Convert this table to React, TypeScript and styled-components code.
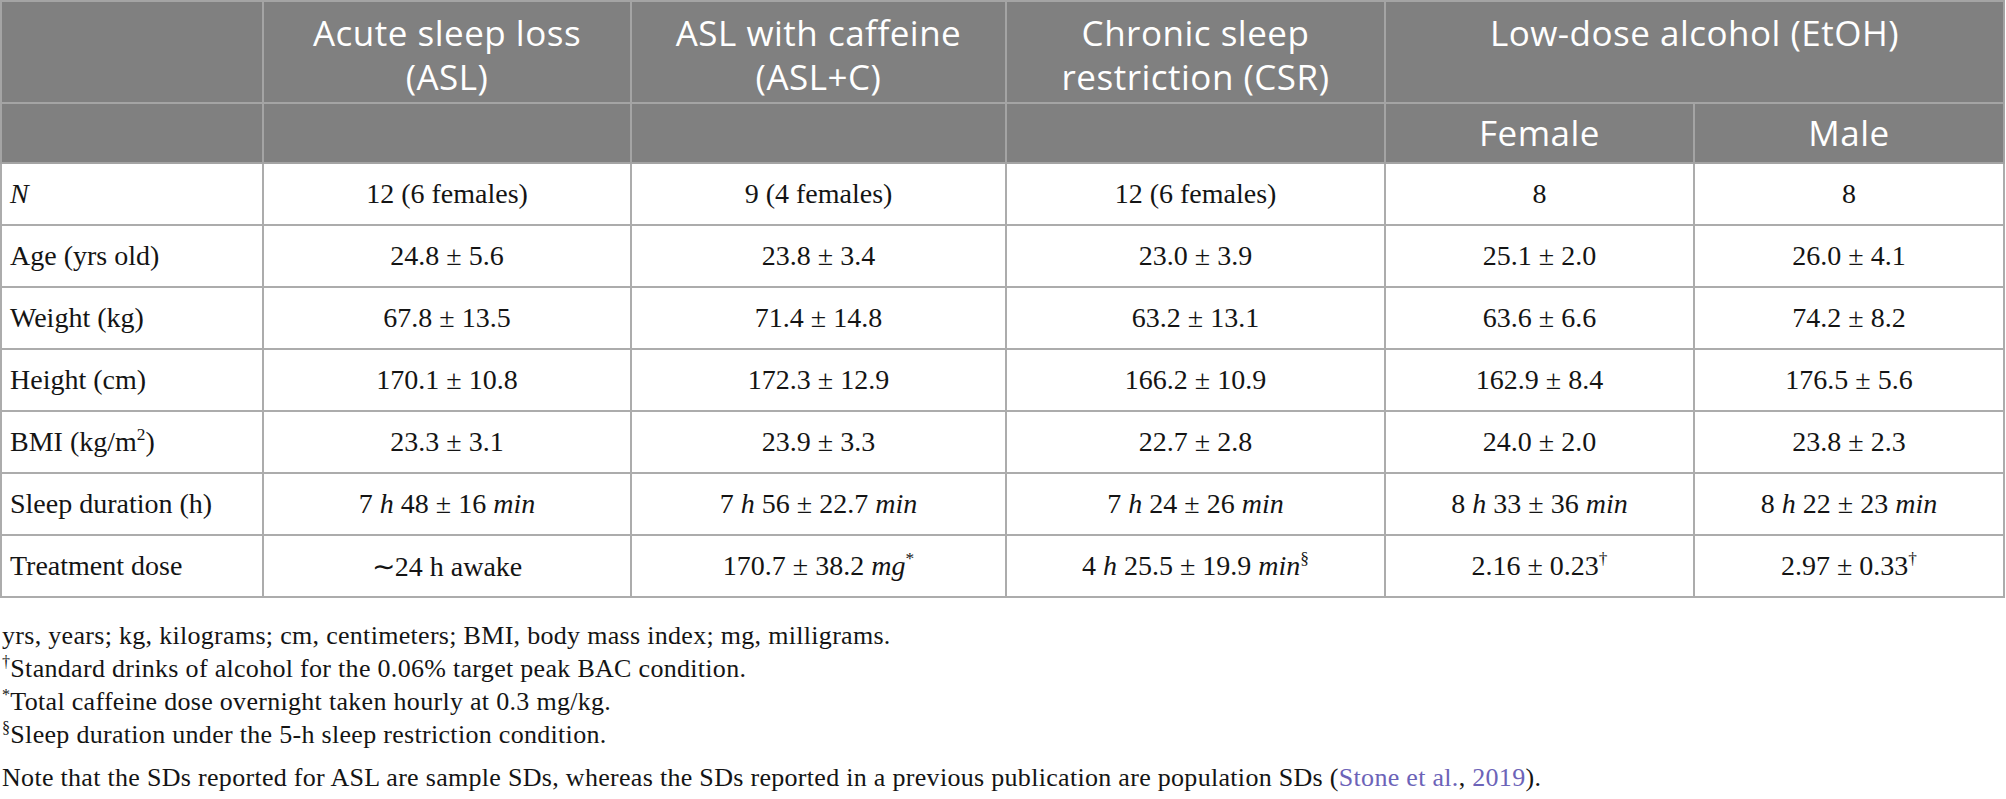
import React, { ReactNode } from "react";
import styled, { createGlobalStyle } from "styled-components";

const GlobalStyle = createGlobalStyle`
  html, body {
    margin: 0;
    padding: 0;
    background: #ffffff;
  }
`;

const Page = styled.div`
  width: 2006px;
  box-sizing: border-box;
`;

const Table = styled.table`
  width: 2003px;
  border-collapse: collapse;
  table-layout: fixed;
`;

const HeadCell = styled.th<{ $tall?: boolean }>`
  background: #808080;
  color: #ffffff;
  font-family: "Open Sans", "Noto Sans", sans-serif;
  font-weight: 400;
  font-size: 35px;
  letter-spacing: 0.5px;
  line-height: 44px;
  text-align: center;
  vertical-align: ${(p) => (p.$tall ? "top" : "middle")};
  height: ${(p) => (p.$tall ? "102px" : "60px")};
  padding: ${(p) => (p.$tall ? "9px 6px 0" : "0 6px")};
  border: 2px solid #a4a4a4;
  box-sizing: border-box;
`;

const Cell = styled.td`
  font-family: "Liberation Serif", "Times New Roman", serif;
  font-size: 28px;
  color: #141414;
  text-align: center;
  vertical-align: middle;
  height: 60px;
  padding: 0 6px;
  border: 2px solid #acacac;
  white-space: nowrap;
`;

const LabelCell = styled(Cell)`
  text-align: left;
  padding-left: 8px;
`;

const I = styled.i`
  font-style: italic;
`;

const Sup = styled.sup`
  font-size: 0.62em;
  line-height: 0;
  vertical-align: 0.65em;
`;

const Notes = styled.div`
  padding: 21px 0 0 2px;
  font-family: "Liberation Serif", "Times New Roman", serif;
  font-size: 26px;
  letter-spacing: 0.3px;
  color: #141414;
`;

const Note = styled.p<{ $gap?: boolean }>`
  margin: ${(p) => (p.$gap ? "10px 0 0" : "0")};
  line-height: 33px;
`;

const Ref = styled.span`
  color: #6c63b8;
`;

type Row = {
  label: ReactNode;
  values: ReactNode[];
};

const rows: Row[] = [
  {
    label: <I>N</I>,
    values: ["12 (6 females)", "9 (4 females)", "12 (6 females)", "8", "8"],
  },
  {
    label: "Age (yrs old)",
    values: ["24.8 ± 5.6", "23.8 ± 3.4", "23.0 ± 3.9", "25.1 ± 2.0", "26.0 ± 4.1"],
  },
  {
    label: "Weight (kg)",
    values: ["67.8 ± 13.5", "71.4 ± 14.8", "63.2 ± 13.1", "63.6 ± 6.6", "74.2 ± 8.2"],
  },
  {
    label: "Height (cm)",
    values: ["170.1 ± 10.8", "172.3 ± 12.9", "166.2 ± 10.9", "162.9 ± 8.4", "176.5 ± 5.6"],
  },
  {
    label: (
      <>
        BMI (kg/m<Sup>2</Sup>)
      </>
    ),
    values: ["23.3 ± 3.1", "23.9 ± 3.3", "22.7 ± 2.8", "24.0 ± 2.0", "23.8 ± 2.3"],
  },
  {
    label: "Sleep duration (h)",
    values: [
      <>7 <I>h</I> 48 ± 16 <I>min</I></>,
      <>7 <I>h</I> 56 ± 22.7 <I>min</I></>,
      <>7 <I>h</I> 24 ± 26 <I>min</I></>,
      <>8 <I>h</I> 33 ± 36 <I>min</I></>,
      <>8 <I>h</I> 22 ± 23 <I>min</I></>,
    ],
  },
  {
    label: "Treatment dose",
    values: [
      "∼24 h awake",
      <>170.7 ± 38.2 <I>mg</I><Sup>*</Sup></>,
      <>4 <I>h</I> 25.5 ± 19.9 <I>min</I><Sup>§</Sup></>,
      <>2.16 ± 0.23<Sup>†</Sup></>,
      <>2.97 ± 0.33<Sup>†</Sup></>,
    ],
  },
];

const columnWidths = [262, 368, 375, 379, 309, 310];

export default function App() {
  return (
    <Page>
      <GlobalStyle />
      <Table>
        <colgroup>
          {columnWidths.map((w, i) => (
            <col key={i} style={{ width: w }} />
          ))}
        </colgroup>
        <thead>
          <tr>
            <HeadCell $tall />
            <HeadCell $tall>
              Acute sleep loss
              <br />
              (ASL)
            </HeadCell>
            <HeadCell $tall>
              ASL with caffeine
              <br />
              (ASL+C)
            </HeadCell>
            <HeadCell $tall>
              Chronic sleep
              <br />
              restriction (CSR)
            </HeadCell>
            <HeadCell $tall colSpan={2}>
              Low-dose alcohol (EtOH)
            </HeadCell>
          </tr>
          <tr>
            <HeadCell />
            <HeadCell />
            <HeadCell />
            <HeadCell />
            <HeadCell>Female</HeadCell>
            <HeadCell>Male</HeadCell>
          </tr>
        </thead>
        <tbody>
          {rows.map((row, i) => (
            <tr key={i}>
              <LabelCell>{row.label}</LabelCell>
              {row.values.map((v, j) => (
                <Cell key={j}>{v}</Cell>
              ))}
            </tr>
          ))}
        </tbody>
      </Table>

      <Notes>
        <Note>yrs, years; kg, kilograms; cm, centimeters; BMI, body mass index; mg, milligrams.</Note>
        <Note>
          <Sup>†</Sup>Standard drinks of alcohol for the 0.06% target peak BAC condition.
        </Note>
        <Note>
          <Sup>*</Sup>Total caffeine dose overnight taken hourly at 0.3 mg/kg.
        </Note>
        <Note>
          <Sup>§</Sup>Sleep duration under the 5-h sleep restriction condition.
        </Note>
        <Note $gap>
          Note that the SDs reported for ASL are sample SDs, whereas the SDs reported in a previous
          publication are population SDs (<Ref>Stone et al.</Ref>, <Ref>2019</Ref>).
        </Note>
      </Notes>
    </Page>
  );
}
